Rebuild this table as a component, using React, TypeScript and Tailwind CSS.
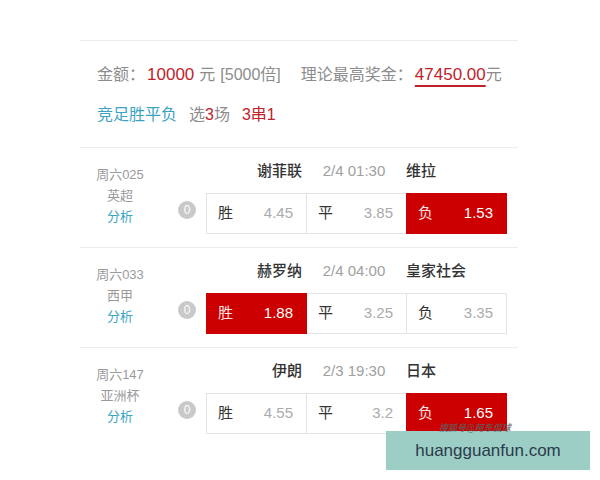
type Pick = 'win' | 'draw' | 'lose';

type Match = {
  code: string;
  league: string;
  home: string;
  time: string;
  away: string;
  odds: [string, string, string];
  pick: Pick;
};

const matches: Match[] = [
  { code: '周六025', league: '英超', home: '谢菲联', time: '2/4 01:30', away: '维拉', odds: ['4.45', '3.85', '1.53'], pick: 'lose' },
  { code: '周六033', league: '西甲', home: '赫罗纳', time: '2/4 04:00', away: '皇家社会', odds: ['1.88', '3.25', '3.35'], pick: 'win' },
  { code: '周六147', league: '亚洲杯', home: '伊朗', time: '2/3 19:30', away: '日本', odds: ['4.55', '3.2', '1.65'], pick: 'lose' },
];

const labels: { key: Pick; text: string }[] = [
  { key: 'win', text: '胜' },
  { key: 'draw', text: '平' },
  { key: 'lose', text: '负' },
];

function MatchRow({ m }: { m: Match }) {
  return (
    <div className="flex h-[100px] border-t border-[#ececec]">
      {/* left info column */}
      <div className="w-[80px] pt-[18px] flex flex-col items-center text-[13px] leading-[18px]">
        <span className="text-[#9a9a9a]">{m.code}</span>
        <span className="mt-[3px] text-[#9a9a9a]">{m.league}</span>
        <span className="mt-[3px] text-[#3ba5c4]">分析</span>
      </div>

      <div className="flex flex-col pt-[13px]">
        {/* teams header */}
        <div className="ml-[46px] w-[301px] flex h-[20px] items-center text-[15px] leading-[20px]">
          <span className="w-[96px] text-right font-medium text-[#333]">{m.home}</span>
          <span className="w-[104px] text-center text-[#a0a0a0]">{m.time}</span>
          <span className="flex-1 font-medium text-[#333]">{m.away}</span>
        </div>

        <div className="mt-[12px] flex items-start">
          <div className="ml-[18px] mt-[8px] mr-[10px] w-[18px] h-[18px] rounded-full bg-[#c9c9c9] text-white text-[12px] leading-[18px] text-center">
            0
          </div>
          <div className="flex">
            {labels.map((l, i) => {
              const on = m.pick === l.key;
              return (
                <div
                  key={l.key}
                  className={`${i > 0 ? '-ml-px' : ''} ${
                    on ? 'relative z-10 bg-[#cc0000] border-[#cc0000]' : 'bg-white border-[#e3e3e3]'
                  } w-[101px] h-[41px] border flex items-center justify-between pl-[11px] pr-[13px] text-[15px]`}
                >
                  <span className={on ? 'text-[#fbe3e3]' : 'text-[#333]'}>{l.text}</span>
                  <span className={on ? 'text-white' : 'text-[#ababab]'}>{m.odds[i]}</span>
                </div>
              );
            })}
          </div>
        </div>
      </div>
    </div>
  );
}

export default function App() {
  return (
    <div
      className="relative w-[600px] h-[480px] overflow-hidden bg-white"
      style={{ fontFamily: '"Liberation Sans", "Noto Sans CJK SC", sans-serif' }}
    >
      <div className="relative ml-[80px] w-[438px] pt-[40px]">
        {/* summary */}
        <div className="h-[107px] border-t border-[#ececec] pl-[17px] text-[16px] leading-[24px]">
          <div className="pt-[22px] flex items-center text-[#8c8c8c] whitespace-nowrap">
            <span>金额：</span>
            <span className="ml-[2px] text-[#c0222a] text-[17px]">10000</span>
            <span className="ml-[5px]">元</span>
            <span className="ml-[5px]">[5000倍]</span>
            <span className="ml-[20px]">理论最高奖金：</span>
            <span className="ml-[2px] text-[#c0222a] text-[17px] underline decoration-[#c0222a] decoration-[1.5px] underline-offset-[5px]">
              47450.00
            </span>
            <span>元</span>
          </div>
          <div className="mt-[16px] flex items-center whitespace-nowrap">
            <span className="text-[#3aa3c0]">竞足胜平负</span>
            <span className="ml-[12px] text-[#8c8c8c]">
              选<span className="text-[#c0222a]">3</span>场
            </span>
            <span className="ml-[12px] text-[#c0222a]">3串1</span>
          </div>
        </div>

        {matches.map((m) => (
          <MatchRow key={m.code} m={m} />
        ))}
      </div>

      {/* overlay */}
      <div className="absolute z-20 left-[386px] top-[431px] w-[204px] h-[39px] bg-[#9ccec6] flex items-center justify-center text-[17px] text-[#2b3b4b]">
        huangguanfun.com
      </div>
      <span className="absolute z-30 left-[439px] top-[422px] text-[9px] leading-[12px] italic font-bold text-[#5f5f5f] opacity-80">
        搜狐号@阿东侃球
      </span>
    </div>
  );
}
